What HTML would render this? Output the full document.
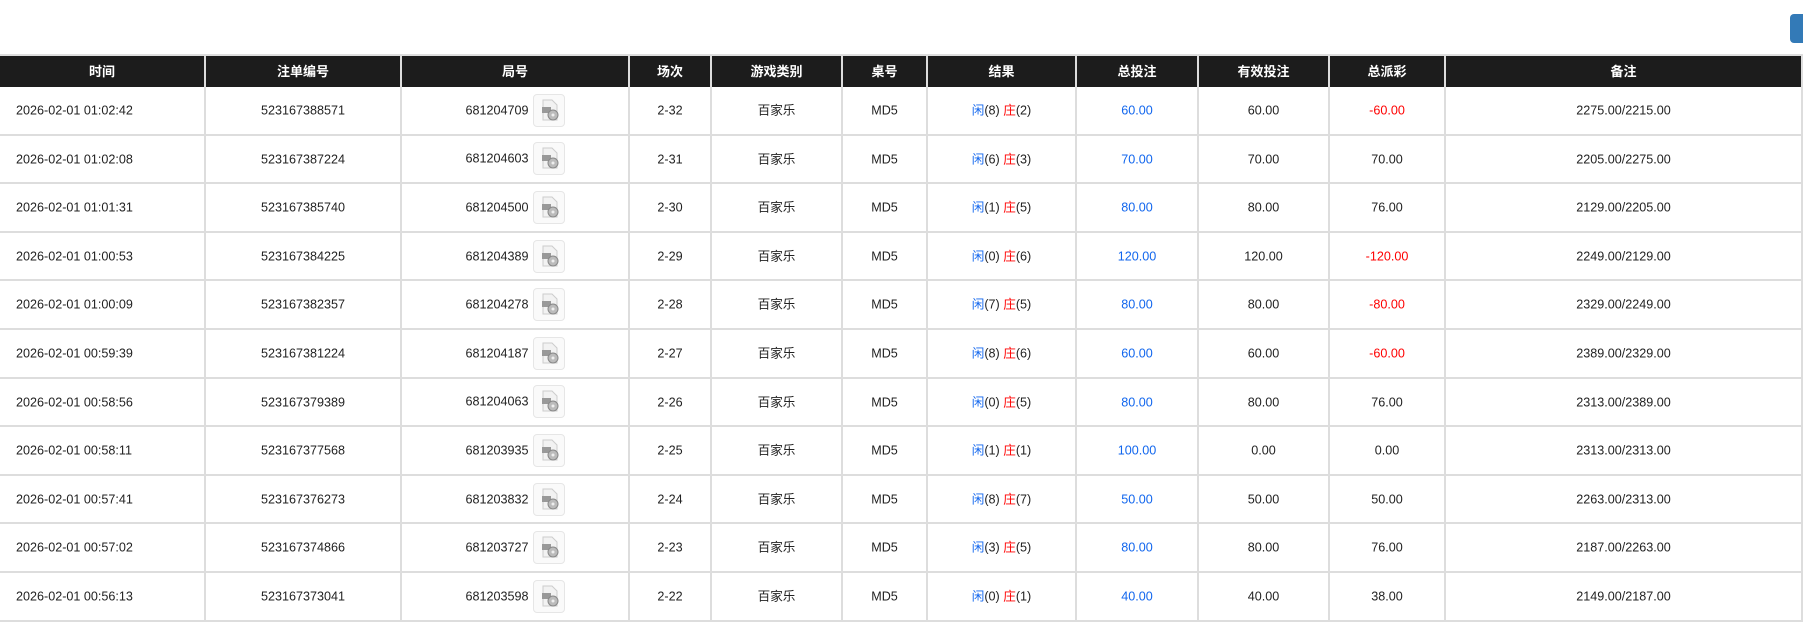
<!DOCTYPE html>
<html><head><meta charset="utf-8"><style>
body{margin:0;background:#fff;width:1803px;height:623px;overflow:hidden;font-family:"Liberation Sans","Noto Sans CJK SC",sans-serif;font-size:13px;color:#222}
.btn{position:absolute;left:1790px;top:14px;width:20px;height:29px;background:#337ab7;border-radius:4px}
table{position:absolute;top:54px;left:0;width:1803px;border-collapse:collapse;table-layout:fixed}
th{background:#1c1c1c;color:#fff;font-weight:bold;height:31px;padding:0;border-left:2px solid #ddd;border-right:2px solid #ddd;border-top:2px solid #ddd;font-size:13px;line-height:16px}
td{height:46.6px;padding:0;text-align:center;border:2px solid #ddd;border-top:0;font-size:12.6px;line-height:16px;vertical-align:middle}
td span{vertical-align:middle;line-height:16px}
td:first-child{text-align:left;padding-left:16px}
tr td:first-child,tr th:first-child{border-left:0}
.b{color:#1166ee}.r{color:#f00}
.ic{display:inline-block;vertical-align:middle;width:30px;height:31px;border:1px solid #e6e6e6;border-radius:4px;margin-left:4px;background:#fafafa}
.ic svg{display:block}
</style></head><body>
<div class="btn"></div>
<table>
<colgroup><col style="width:205px"><col style="width:196px"><col style="width:228px"><col style="width:82px"><col style="width:131px"><col style="width:85px"><col style="width:149px"><col style="width:122px"><col style="width:131px"><col style="width:116px"><col></colgroup>
<tr><th>时间</th><th>注单编号</th><th>局号</th><th>场次</th><th>游戏类别</th><th>桌号</th><th>结果</th><th>总投注</th><th>有效投注</th><th>总派彩</th><th>备注</th></tr>
</table>
<script>
var d=[["2026-02-01 01:02:42","523167388571","681204709","2-32",8,2,"60.00","60.00","-60.00","2275.00/2215.00"],
["2026-02-01 01:02:08","523167387224","681204603","2-31",6,3,"70.00","70.00","70.00","2205.00/2275.00"],
["2026-02-01 01:01:31","523167385740","681204500","2-30",1,5,"80.00","80.00","76.00","2129.00/2205.00"],
["2026-02-01 01:00:53","523167384225","681204389","2-29",0,6,"120.00","120.00","-120.00","2249.00/2129.00"],
["2026-02-01 01:00:09","523167382357","681204278","2-28",7,5,"80.00","80.00","-80.00","2329.00/2249.00"],
["2026-02-01 00:59:39","523167381224","681204187","2-27",8,6,"60.00","60.00","-60.00","2389.00/2329.00"],
["2026-02-01 00:58:56","523167379389","681204063","2-26",0,5,"80.00","80.00","76.00","2313.00/2389.00"],
["2026-02-01 00:58:11","523167377568","681203935","2-25",1,1,"100.00","0.00","0.00","2313.00/2313.00"],
["2026-02-01 00:57:41","523167376273","681203832","2-24",8,7,"50.00","50.00","50.00","2263.00/2313.00"],
["2026-02-01 00:57:02","523167374866","681203727","2-23",3,5,"80.00","80.00","76.00","2187.00/2263.00"],
["2026-02-01 00:56:13","523167373041","681203598","2-22",0,1,"40.00","40.00","38.00","2149.00/2187.00"]];
var ic='<span class="ic"><svg width="30" height="31" viewBox="0 0 30 31"><path d="M9 5h9l5 5v15H9z" fill="#f2f2f2" stroke="#ccc"/><path d="M8 12h9v6H8z" fill="#999"/><circle cx="19" cy="20" r="5" fill="#bbb" stroke="#888"/><circle cx="19" cy="20" r="1.5" fill="#eee"/></svg></span>';
function s(x,c){return "<span"+(c?" class='"+c+"'":"")+">"+x+"</span>";}
var t=document.querySelector("table"),h="";
d.forEach(function(r){h+="<tr><td>"+s(r[0])+"</td><td>"+s(r[1])+"</td><td>"+s(r[2])+ic+"</td><td>"+s(r[3])+"</td><td>"+s("百家乐")+"</td><td>"+s("MD5")+"</td><td>"+s("闲","b")+s("("+r[4]+") ")+s("庄","r")+s("("+r[5]+")")+"</td><td>"+s(r[6],"b")+"</td><td>"+s(r[7])+"</td><td>"+s(r[8],r[8][0]=="-"?"r":"")+"</td><td>"+s(r[9])+"</td></tr>";});
t.insertAdjacentHTML("beforeend",h);
</script>
</body></html>
